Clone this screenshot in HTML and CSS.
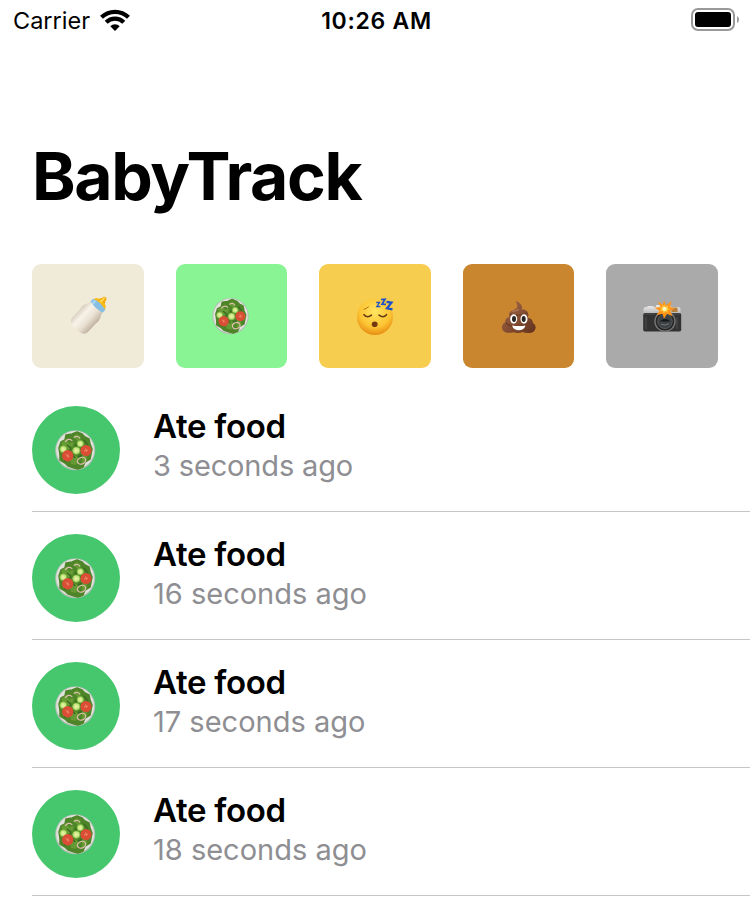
FILE: index.html
```html
<!DOCTYPE html>
<html lang="en">
<head>
<meta charset="utf-8">
<title>BabyTrack</title>
<link rel="stylesheet" href="styles.css">
</head>
<body>
<svg class="defs" aria-hidden="true">
  <defs>
    <linearGradient id="milk" x1="0" y1="0" x2="1" y2="0"><stop offset="0" stop-color="#d8cebe"/><stop offset=".3" stop-color="#f8f3e9"/><stop offset=".65" stop-color="#e8e0d2"/><stop offset="1" stop-color="#bfb19e"/></linearGradient>
    <radialGradient id="face" cx=".5" cy=".35" r=".65"><stop offset="0" stop-color="#ffe561"/><stop offset=".65" stop-color="#fdc534"/><stop offset="1" stop-color="#e78d12"/></radialGradient>
    <linearGradient id="poo" x1="0" y1="0" x2="1" y2="1"><stop offset="0" stop-color="#a36a4b"/><stop offset=".6" stop-color="#80492e"/><stop offset="1" stop-color="#60301c"/></linearGradient>
    <linearGradient id="metal" x1="0" y1="0" x2="0" y2="1"><stop offset="0" stop-color="#eeeeee"/><stop offset="1" stop-color="#b5b5b5"/></linearGradient>
    <symbol id="salad" viewBox="0 0 60 60">
      <circle cx="29.200" cy="30.300" r="20" fill="#b3beb6"/>
      <circle cx="29.200" cy="30" r="19" fill="#dfe3dc"/>
      <path d="M13 28l2-6 4-2 1-5 6-1 5-2 5 2 3 3 4 2 1 5 2 5-1 5-1 5-5 3-2 5-5 2-4-1-6-2-3-3-5-3 0-5z" fill="#4f8529" stroke="#4f8529" stroke-width="1.500" stroke-linejoin="round"/>
      <path d="M15 23l5-4 3 4 5-1-2 6-6 3zM27 17l4-3 4 3-2 5zM24 38l5-3 5 4-4 6-5-1zM36 34l5 2 0 5-5 2z" fill="#659a34"/>
      <path d="M21 25l4 3-2 4M29 24l2 3M38 20l4 5M26 34l3 4M18 41l3-1M32 37l4-2" stroke="#396c22" stroke-width="1.500" fill="none"/>
      <g fill="none" stroke="#dfbfae" stroke-width="1.200"><path d="M19.300 22a4 4 0 0 1 7-1M28 17.500c2-2 5-1 6 1"/><ellipse cx="35.500" cy="40.800" rx="4.200" ry="3.300" transform="rotate(-20 35.500 40.800)"/></g>
      <g fill="#cbe884" stroke="#73b43d" stroke-width=".8"><circle cx="17.300" cy="29.200" r="3.400"/><circle cx="30.300" cy="30.600" r="3.700"/><circle cx="34.300" cy="23.700" r="3.200"/></g>
      <g fill="#e9f0a4"><circle cx="17.300" cy="29.200" r="1.300"/><circle cx="30.300" cy="30.600" r="1.500"/><circle cx="34.300" cy="23.700" r="1.200"/></g>
      <g fill="#da4e35"><circle cx="21.700" cy="35.800" r="5.700"/><circle cx="40" cy="30.500" r="5.500"/></g>
      <g stroke="#f29070" stroke-width=".8"><path d="M19.500 34.500l4 2.500M22 34l-.5 3.500M38 31l4-1M39.500 28.500l1.200 3.500"/></g>
    </symbol>
  </defs>
</svg>

<header class="status">
  <div class="carrier"><span>Carrier</span>
    <svg class="wifi" viewBox="0 0 30 22"><g fill="none" stroke="#000" stroke-width="4.200"><path d="M1.500 8.300a19.500 19.500 0 0 1 27 0"/><path d="M6.200 13.300a12.500 12.500 0 0 1 17.600 0"/></g><path d="M10.300 17.200a6.500 6.500 0 0 1 9.400 0L15 22z"/></svg>
  </div>
  <time class="clock">10:26 AM</time>
  <svg class="battery" viewBox="0 0 50 24"><rect x="2" y="1" width="42" height="21" rx="6" fill="none" stroke="#999" stroke-width="2"/><rect x="5" y="4" width="36" height="15" rx="3" fill="#000"/><path d="M47 8q2 1 2 3.500T47 15z" fill="#999"/></svg>
</header>

<main>
  <h1>BabyTrack</h1>
  <nav class="actions">
    <button class="action bottle" aria-label="Bottle"><svg viewBox="0 0 56 56">
      <g transform="translate(28.300 28) rotate(43) scale(1.180 1) translate(-27 -28.500)">
        <path d="M24 10q-.4-3 1-4l.3-2q1.700-2.400 3.400 0l.3 2q1.400 1 1 4z" fill="#f2a90f"/>
        <path d="M20.500 13q0-5 6.500-5t6.500 5z" fill="#fbb918"/>
        <path d="M26.500 4v6" stroke="#ffda50" stroke-width="1.600"/>
        <path d="M20 12.500q7-3 14 0v4q-7 3-14 0z" fill="#86bfe3"/>
        <path d="M22.500 12.500v5" stroke="#a9d4ee" stroke-width="2"/>
        <path d="M20 16.500q7 2 14 0 0 3 1.500 5 1.300 3 .5 8v11q-.2 4.500-4.500 5.500-4.500 1-9 0-4.500-1-4.500-5.500V29.500q-1-5 .5-8 1.500-2 1.500-5z" fill="url(#milk)"/>
      </g></svg></button>
    <button class="action food" aria-label="Food"><svg viewBox="0 0 56 56"><use href="#salad" x="1" y=".6" width="54.500" height="54.500"/></svg></button>
    <button class="action sleep" aria-label="Sleep"><svg viewBox="0 0 56 56">
      <circle cx="28" cy="29" r="18" fill="url(#face)"/>
      <g fill="none" stroke="#653812" stroke-width="1.600" stroke-linecap="round"><path d="M17 26.700q3.300 3.800 7.500.5M32 27.200q4.200 3.300 7.500-.5"/><path d="M17 21.300q2.500-.5 4.500-2.500" stroke="#b06c18" stroke-width="1"/></g>
      <ellipse cx="27.700" cy="36.200" rx="2.900" ry="2.800" fill="#74390f"/>
      <g fill="none" stroke="#1c50c8" stroke-width="1.700"><path d="M29.300 14.500h3.200l-2.700 4h3.600" stroke-width="1.300"/><path d="M34 11.500l4-.3-3 5 4 .2"/><path d="M39.500 13.800l5 .8-4.500 5.700 5.500 1" stroke-width="2.200"/></g>
    </svg></button>
    <button class="action diaper" aria-label="Diaper"><svg viewBox="0 0 56 56">
      <path d="M24.300 13q4 .7 6 4 1.500 2.800 0 4.200 6 0 7 4.500.5 2-.7 4 5 .3 5.400 5.300 3 1.500 2.600 5-.8 5-7 5-4 0-6-1-5 1.700-9 .2-8 2-11-2.200-1.600-3 .4-6 .8-1.300 2.200-1.700-.6-4 4-5.300-1.200-5 3.800-7 5-1.800 4.300-4.500-.3-2.500-2-4.500z" fill="url(#poo)"/>
      <path d="M19 26q9 3 17-1M15 35q6 7 25 0" fill="none" stroke="#6b3b25" stroke-width="1.200"/>
      <path d="M21 23q3 .3 7-1.500" stroke="#b27a59" stroke-width="1.300" fill="none"/>
      <g fill="#fff"><ellipse cx="22.700" cy="31" rx="3.500" ry="4.700"/><ellipse cx="33" cy="31" rx="3.500" ry="4.700"/><path d="M21 37.500q7 1 13.500 0-1.500 4.800-6.700 4.800T21 37.500z"/></g>
      <g fill="#292322"><ellipse cx="23" cy="31" rx="2" ry="2.900"/><ellipse cx="32.700" cy="31" rx="2" ry="2.900"/></g>
    </svg></button>
    <button class="action photo" aria-label="Photo"><svg viewBox="0 0 56 56">
      <path d="M9.500 26v-5q0-1.700 2-2h2v-1h6v1h2l1-2h13l2 2h7q2 .3 2 2v5z" fill="url(#metal)"/>
      <rect x="9.200" y="25" width="38" height="18.500" rx="1.800" fill="#323232"/>
      <path d="M10 26h11M39 26h7M12 29v12M43 29v12" stroke="#515151" stroke-width="1"/>
      <rect x="37.500" y="19.500" width="6" height="4.500" fill="#b87f3a"/>
      <circle cx="31" cy="33.300" r="10.700" fill="#777"/><circle cx="31" cy="33.300" r="9.300" fill="#252525"/><circle cx="31" cy="33.300" r="7.300" fill="#3b4144" stroke="#696969" stroke-width=".7"/>
      <path d="M26 33q5-4 10 0-4 1-10 0z" fill="#15191b"/><path d="M27 36q4 2.500 8-.4" fill="none" stroke="#747a7c"/>
      <path d="M30 12l2 5.500 5.500-4.500-1.200 6 4.500 1.500-4.500 2.300 2.200 5.500-5.500-2.500-3 5-1.500-5-6 1.500 3-4.500-5-3 6-.8-3-5.500 5.500 3z" fill="#ff9519"/>
      <path d="M30.500 16l1 3 3-1.500-1 3 2.500.5-3 1.200 1.200 2.500-3-1.500-1.500 2-.8-2.700-3.200.5 2.200-2-2.200-1.500 3-.2-1-2.500 2.500 1.500z" fill="#ffd242"/><circle cx="30.500" cy="21" r="2" fill="#fff7c8"/>
    </svg></button>
  </nav>

  <ul class="log">
    <li><span class="badge"><svg viewBox="0 0 60 60"><use href="#salad"/></svg></span><div class="entry"><strong>Ate food</strong><span class="first-time">3 seconds ago</span></div></li>
    <li><span class="badge"><svg viewBox="0 0 60 60"><use href="#salad"/></svg></span><div class="entry"><strong>Ate food</strong><span>16 seconds ago</span></div></li>
    <li><span class="badge"><svg viewBox="0 0 60 60"><use href="#salad"/></svg></span><div class="entry"><strong>Ate food</strong><span>17 seconds ago</span></div></li>
    <li><span class="badge"><svg viewBox="0 0 60 60"><use href="#salad"/></svg></span><div class="entry"><strong>Ate food</strong><span>18 seconds ago</span></div></li>
  </ul>
</main>
</body>
</html>
```
FILE: styles.css
```css
* { box-sizing: border-box; }
body { margin: 0; height: 922px; overflow: hidden; background: #fff; color: #000; font-family: Inter, "Liberation Sans", sans-serif; }
.defs { display: block; width: 0; height: 0; }
.status { height: 40px; display: grid; grid-template-columns: 1fr auto 1fr; align-items: start; padding: 0 10px 0 13px; font-size: 23.5px; line-height: 42px; }
.carrier { display: flex; align-items: center; gap: 10px; }
.wifi { width: 30px; height: 22px; margin-top: -3px; }
.clock { font-size: 23px; font-weight: 600; letter-spacing: 0.7px; }
.battery { width: 50px; height: 24px; margin-top: 8px; justify-self: end; }
h1 { margin: 96px 0 0 32px; height: 80px; font-size: 66px; line-height: 80px; font-weight: 700; letter-spacing: -1.35px; }
.actions { margin: 48px 32px 0; display: grid; grid-template-columns: repeat(5, 1fr); gap: 32px; }
.action { height: 104px; border: 0; border-radius: 9px; padding: 0; display: flex; align-items: center; justify-content: center; }
.action svg { width: 56px; height: 56px; }
.bottle { background: #f0ead8; }
.food { background: #88f494; }
.sleep { background: #f7cd4f; }
.diaper { background: #c9862f; }
.photo { background: #aaaaaa; }
.log { list-style: none; margin: 16px 0 0 32px; padding: 0; }
.log li { height: 128px; display: flex; align-items: flex-start; padding-top: 22px; gap: 33px; border-bottom: 1px solid #c6c6c8; }
.badge { width: 88px; height: 88px; border-radius: 50%; background: #46c76e; display: flex; align-items: center; justify-content: center; }
.badge svg { width: 60px; height: 60px; }
.entry { display: flex; flex-direction: column; }
.entry strong { font-size: 33px; line-height: 40px; font-weight: 600; letter-spacing: -0.3px; }
.entry span { font-size: 29px; line-height: 40px; color: #8e8e93; }
.entry .first-time { letter-spacing: -0.15px; }
```
